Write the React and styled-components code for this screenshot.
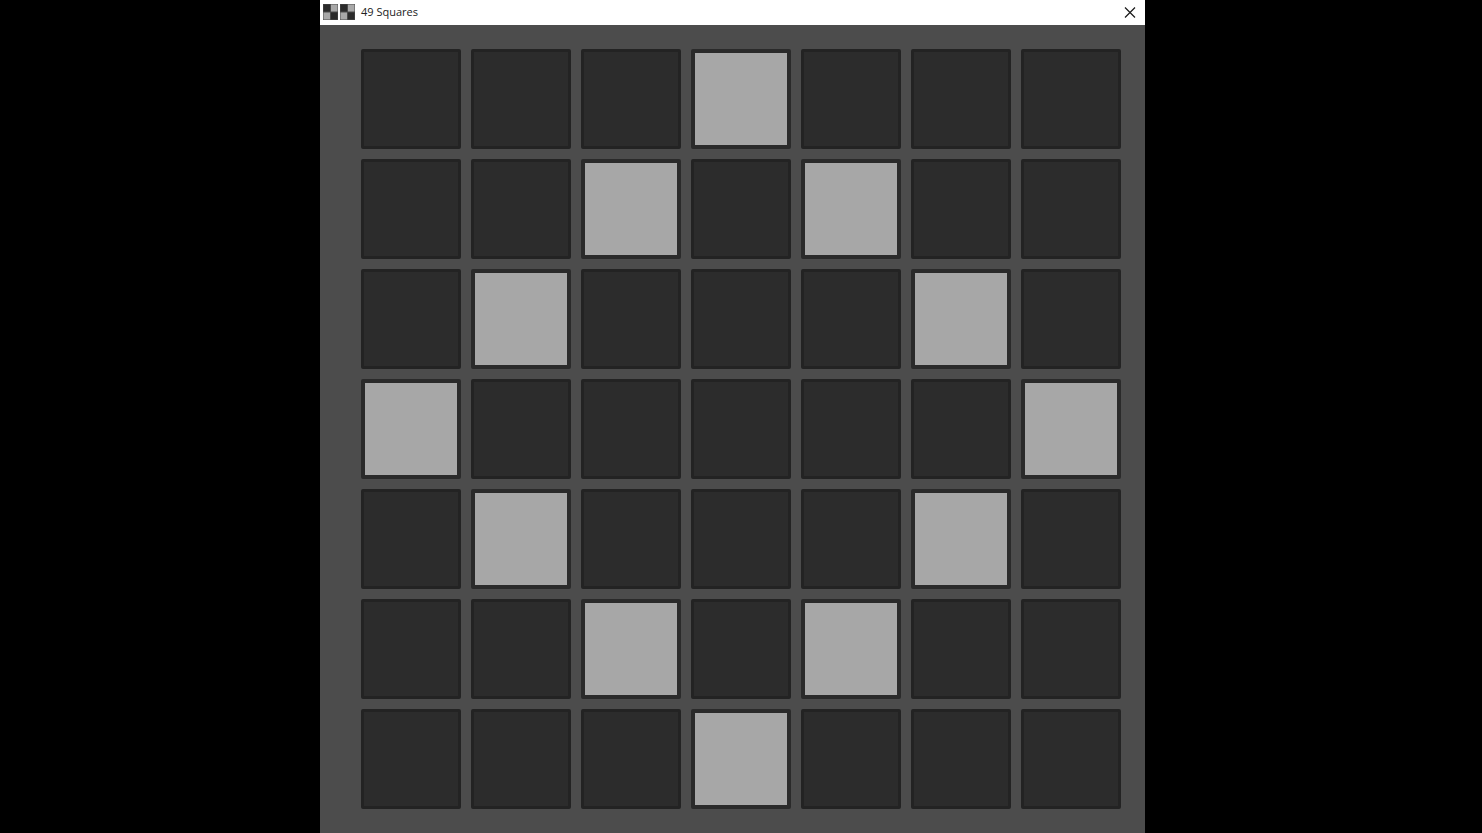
import React from 'react';
import styled, { createGlobalStyle } from 'styled-components';

const LIT = [
  [0, 3],
  [1, 2], [1, 4],
  [2, 1], [2, 5],
  [3, 0], [3, 6],
  [4, 1], [4, 5],
  [5, 2], [5, 4],
  [6, 3],
];

const isLit = (row, col) => LIT.some(([r, c]) => r === row && c === col);

const CheckerIcon = () => (
  <svg width="15" height="16" viewBox="0 0 15 16">
    <rect width="15" height="16" fill="#4c4c4c" />
    <rect x="0.5" y="0.5" width="6.5" height="7" fill="#2b2b2b" />
    <rect x="8" y="0.5" width="6.5" height="7" fill="#a8a8a8" />
    <rect x="0.5" y="8.5" width="6.5" height="7" fill="#a8a8a8" />
    <rect x="8" y="8.5" width="6.5" height="7" fill="#2b2b2b" />
  </svg>
);

const App = () => {
  const rows = [0, 1, 2, 3, 4, 5, 6];
  return (
    <>
      <GlobalStyle />
      <Page>
        <Window>
          <TitleBar>
            <Icons>
              <CheckerIcon />
              <CheckerIcon />
            </Icons>
            <Title>49 Squares</Title>
            <CloseButton aria-label="Close">
              <svg width="12" height="12" viewBox="0 0 12 12">
                <path d="M1 0.5 L11 10.5 M11 0.5 L1 10.5" stroke="#1a1a1a" strokeWidth="1.2" fill="none" />
              </svg>
            </CloseButton>
          </TitleBar>
          <Board>
            {rows.map((row) =>
              rows.map((col) => <Square key={`${row}-${col}`} $lit={isLit(row, col)} />)
            )}
          </Board>
        </Window>
      </Page>
    </>
  );
};

const GlobalStyle = createGlobalStyle`
  html, body {
    margin: 0;
    height: 100%;
    background: #000;
    overflow: hidden;
  }
`;

const Page = styled.div`
  height: 833px;
  display: flex;
  justify-content: flex-start;
  padding-left: 320px;
  background: #000;
`;

const Window = styled.div`
  width: 825px;
  height: 833px;
  display: flex;
  flex-direction: column;
  background: #4c4c4c;
`;

const TitleBar = styled.div`
  height: 25px;
  flex: none;
  display: flex;
  align-items: center;
  padding-left: 3px;
  background: #fff;
`;

const Icons = styled.div`
  display: flex;
  gap: 2px;
  margin-top: -1px;
`;

const Title = styled.span`
  flex: 1;
  margin-left: 6px;
  margin-top: -2px;
  font-family: "Open Sans", "Noto Sans", sans-serif;
  font-size: 11px;
  color: #222;
`;

const CloseButton = styled.div`
  width: 30px;
  height: 25px;
  display: flex;
  align-items: center;
  justify-content: center;
`;

const Board = styled.div`
  display: grid;
  grid-template-columns: repeat(7, 100px);
  grid-auto-rows: 100px;
  gap: 10px;
  padding: 24px 0 0 41px;
`;

const Square = styled.div`
  box-sizing: border-box;
  border-radius: 2px;
  background: ${(p) => (p.$lit ? '#a7a7a7' : '#2c2c2c')};
  border: ${(p) => (p.$lit ? '4px solid #2a2a2a' : '3px solid #232323')};
`;

export default App;
